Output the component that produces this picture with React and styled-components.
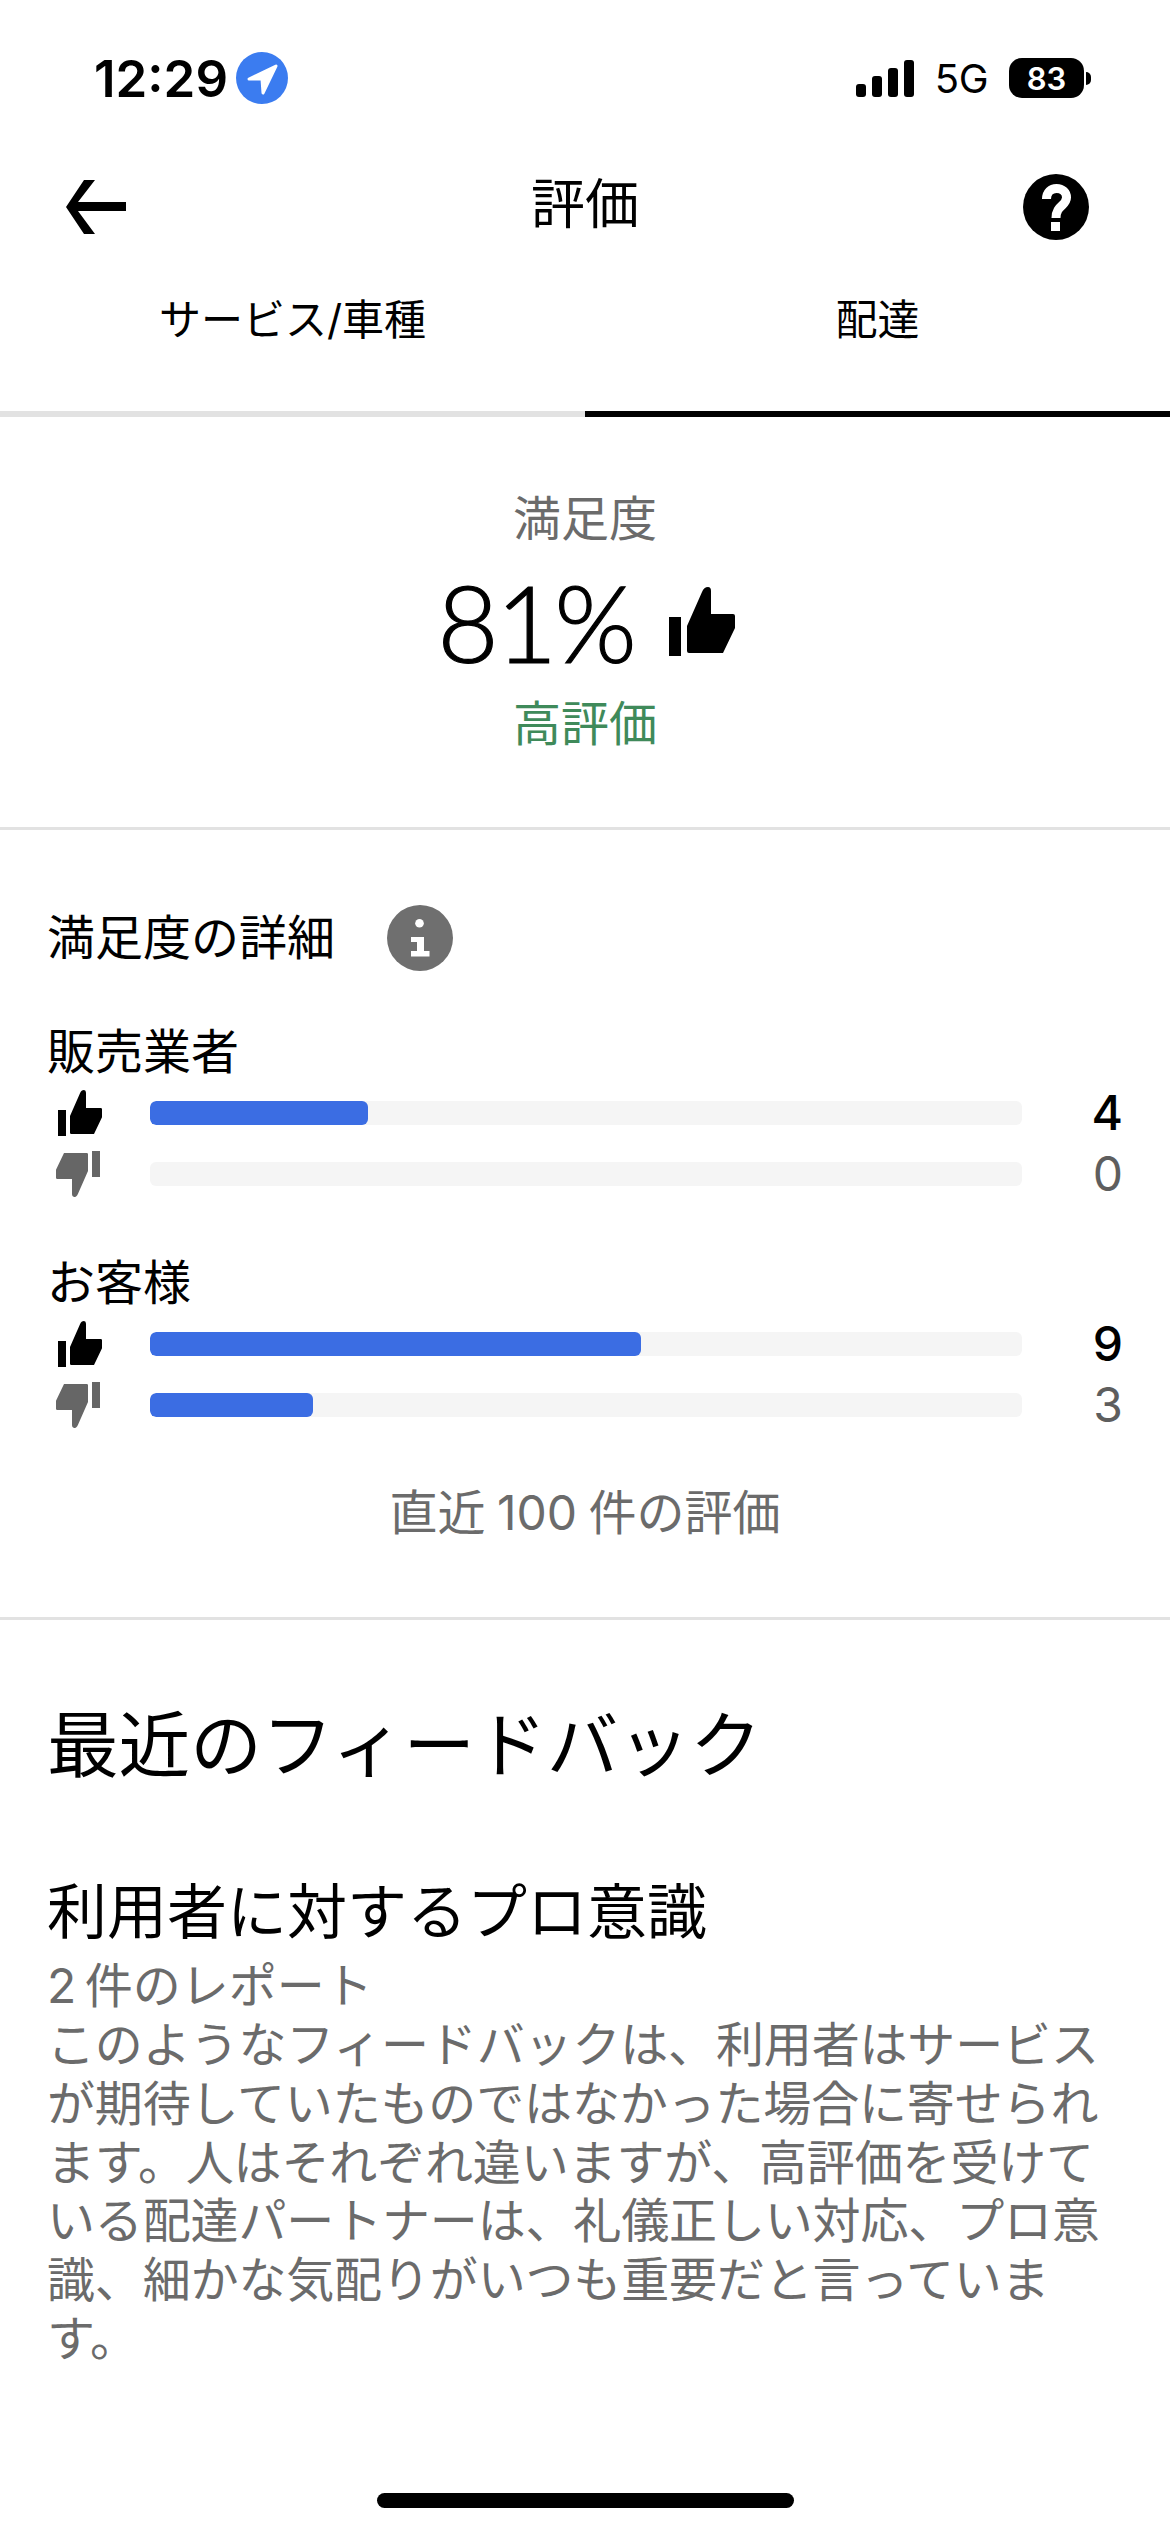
import React from 'react'
import styled, { createGlobalStyle } from 'styled-components'

const GlobalStyle = createGlobalStyle`
  html, body {
    margin: 0;
    padding: 0;
    background: #fff;
  }
  body {
    font-family: Inter, "Noto Sans CJK JP", sans-serif;
    color: #000;
  }
`

const Page = styled.div`
  position: relative;
  width: 1170px;
  height: 2532px;
  overflow: hidden;
  background: #fff;
`

const StatusBar = styled.div`
  height: 156px;
  padding: 0 79px 0 94px;
  box-sizing: border-box;
  display: flex;
  align-items: center;
  justify-content: space-between;
`

const StatusGroup = styled.div`
  display: flex;
  align-items: center;
`

const Clock = styled.span`
  font-size: 51px;
  font-weight: 600;
  margin-right: 8px;
`

const Network = styled.span`
  font-size: 40px;
  letter-spacing: -0.5px;
  margin: 0 21px;
`

const Battery = styled.div`
  position: relative;
  width: 75px;
  height: 40px;
  border-radius: 13px;
  background: #000;
  color: #fff;
  font-size: 31px;
  font-weight: 600;
  display: flex;
  align-items: center;
  justify-content: center;
  margin-right: 7px;

  &::after {
    content: '';
    position: absolute;
    left: 77px;
    top: 14px;
    width: 5px;
    height: 13px;
    border-radius: 0 7px 7px 0;
    background: #000;
  }
`

const NavBar = styled.div`
  height: 102px;
  padding: 0 81px 0 66px;
  box-sizing: border-box;
  display: grid;
  grid-template-columns: 1fr auto 1fr;
  align-items: center;
  justify-items: start;

  & > :last-child {
    justify-self: end;
  }
`

const NavTitle = styled.h1`
  margin: 0 0 4px 15px;
  font-size: 54px;
  font-weight: 400;
  line-height: 1;
`

const Tabs = styled.div`
  display: grid;
  grid-template-columns: 1fr 1fr;
`

const Tab = styled.div`
  height: 159px;
  box-sizing: border-box;
  padding-top: 31px;
  font-size: 42px;
  line-height: 62px;
  text-align: center;
  border-bottom: 6px solid ${({ $active }) => ($active ? '#000' : '#e2e2e2')};
`

const Summary = styled.section`
  height: 413px;
  box-sizing: border-box;
  padding-top: 72px;
  display: flex;
  flex-direction: column;
  align-items: center;
  border-bottom: 3px solid #e2e2e2;
`

const SummaryLabel = styled.div`
  font-size: 48px;
  line-height: 60px;
  color: ${({ $color }) => $color};
`

const Score = styled.div`
  display: flex;
  align-items: center;
  height: 145px;
  padding-left: 2px;
`

const ScoreValue = styled.span`
  font-family: Lato, sans-serif;
  font-size: 106px;
  font-weight: 300;
  letter-spacing: -3px;
  -webkit-text-stroke: 1.2px #000;
  margin-right: 35px;
`

const Details = styled.section`
  padding: 75px 47px 74px;
  border-bottom: 3px solid #e2e2e2;
`

const DetailsHeader = styled.div`
  display: flex;
  align-items: center;
  gap: 52px;
  margin-bottom: 51px;
`

const DetailsTitle = styled.h2`
  margin: 0;
  font-size: 48px;
  font-weight: 400;
  line-height: 66px;
`

const Group = styled.div`
  margin-bottom: 49px;
`

const GroupLabel = styled.div`
  font-size: 48px;
  line-height: 60px;
`

const Row = styled.div`
  height: 61px;
  display: flex;
  align-items: center;
`

const RowIcon = styled.div`
  width: 103px;
  padding-left: ${({ $down }) => ($down ? 9 : 11)}px;
  box-sizing: border-box;
  display: flex;
`

const Track = styled.div`
  width: 872px;
  height: 24px;
  border-radius: 6px;
  background: #f5f5f5;
  overflow: hidden;
`

const Fill = styled.div`
  height: 100%;
  border-radius: 6px;
  background: #3b6de3;
`

const Count = styled.div`
  flex: 1;
  text-align: right;
  font-size: 48px;
  font-weight: ${({ $down }) => ($down ? 400 : 500)};
  color: ${({ $down }) => ($down ? '#5e5e5e' : '#000')};
`

const DetailsNote = styled.div`
  margin-top: -1px;
  font-size: 48px;
  line-height: 60px;
  word-spacing: -2px;
  text-align: center;
  color: #6b6b6b;
`

const Feedback = styled.section`
  padding: 80px 47px 0;
`

const FeedbackTitle = styled.h2`
  margin: 0 0 84px;
  font-size: 71.6px;
  font-weight: 400;
  line-height: 90px;
`

const TopicTitle = styled.h3`
  margin: 0;
  font-size: 60px;
  font-weight: 400;
  line-height: 76px;
`

const TopicCount = styled.div`
  margin-top: 6px;
  font-size: 48px;
  line-height: 60px;
  word-spacing: -5px;
  color: #6b6b6b;
`

const TopicBody = styled.p`
  margin: 0;
  font-size: 48px;
  line-height: 58.8px;
  letter-spacing: -0.15px;
  color: #6b6b6b;
`

const HomeIndicator = styled.div`
  position: absolute;
  left: 377px;
  bottom: 24px;
  width: 417px;
  height: 15px;
  border-radius: 8px;
  background: #000;
`

const SignalIcon = () => (
  <svg width="58" height="37" viewBox="0 0 58 37">
    <rect x="0" y="24" width="10" height="13" rx="3" />
    <rect x="16" y="16" width="10" height="21" rx="3" />
    <rect x="32" y="8" width="10" height="29" rx="3" />
    <rect x="48" y="0" width="10" height="37" rx="3" />
  </svg>
)

const LocationIcon = () => (
  <svg width="52" height="52" viewBox="0 0 52 52">
    <circle cx="26" cy="26" r="26" fill="#3b7cf0" />
    <path
      d="M13 27 L40 14 L27 41 L26 27 Z"
      fill="#fff"
      stroke="#fff"
      strokeWidth="3"
      strokeLinejoin="round"
    />
  </svg>
)

const BackIcon = () => (
  <svg width="60" height="54" viewBox="0 0 60 54">
    <path d="M18 0 H29 L12 22 H60 V31 H12 L29 54 H18 L0 27 Z" />
  </svg>
)

const HelpIcon = () => (
  <svg width="66" height="66" viewBox="0 0 66 66">
    <circle cx="33" cy="33" r="33" />
    <path
      d="M23.5 25 C23.5 18 28 14.5 33.5 14.5 C39.5 14.5 43.5 18.5 43.5 23.5 C43.5 32 33 31 33 44"
      fill="none"
      stroke="#fff"
      strokeWidth="9"
    />
    <rect x="28" y="48" width="9" height="9" fill="#fff" />
  </svg>
)

const InfoIcon = () => (
  <svg width="66" height="66" viewBox="0 0 66 66">
    <circle cx="33" cy="33" r="33" fill="#6f6f6f" />
    <circle cx="32.5" cy="18.3" r="4.3" fill="#fff" />
    <path d="M24 32 H37 V46 H42.5 V51.5 H24 V46 H30 V37 H24 Z" fill="#fff" />
  </svg>
)

const ThumbIcon = ({ width, height, color = '#000', down }) => (
  <svg
    width={width}
    height={height}
    viewBox="0 0 66 69"
    fill={color}
    style={down ? { transform: 'rotate(180deg)' } : undefined}
  >
    <rect x="0" y="30" width="12" height="39" />
    <path d="M18 39 L33 5 Q35 0 39 0 Q42 0 42 4 V27 H64 Q66 27 66 29 V41 L54 66 H20 Q18 66 18 64 Z" />
  </svg>
)

const groups = [
  { label: '販売業者', up: 4, upWidth: 25, down: 0, downWidth: 0 },
  { label: 'お客様', up: 9, upWidth: 56.3, down: 3, downWidth: 18.7 },
]

const RatingRow = ({ value, width, down }) => (
  <Row>
    <RowIcon $down={down}>
      <ThumbIcon width={44} height={46} color={down ? '#666' : '#000'} down={down} />
    </RowIcon>
    <Track>
      <Fill style={{ width: `${width}%` }} />
    </Track>
    <Count $down={down}>{value}</Count>
  </Row>
)

const App = () => (
  <Page>
    <GlobalStyle />
    <StatusBar>
      <StatusGroup>
        <Clock>12:29</Clock>
        <LocationIcon />
      </StatusGroup>
      <StatusGroup>
        <SignalIcon />
        <Network>5G</Network>
        <Battery>83</Battery>
      </StatusGroup>
    </StatusBar>

    <NavBar>
      <BackIcon />
      <NavTitle>評価</NavTitle>
      <HelpIcon />
    </NavBar>

    <Tabs>
      <Tab>サービス/車種</Tab>
      <Tab $active>配達</Tab>
    </Tabs>

    <Summary>
      <SummaryLabel $color="#6b6b6b">満足度</SummaryLabel>
      <Score>
        <ScoreValue>81%</ScoreValue>
        <ThumbIcon width={66} height={69} />
      </Score>
      <SummaryLabel $color="#3f8a5a">高評価</SummaryLabel>
    </Summary>

    <Details>
      <DetailsHeader>
        <DetailsTitle>満足度の詳細</DetailsTitle>
        <InfoIcon />
      </DetailsHeader>
      {groups.map((group) => (
        <Group key={group.label}>
          <GroupLabel>{group.label}</GroupLabel>
          <RatingRow value={group.up} width={group.upWidth} />
          <RatingRow value={group.down} width={group.downWidth} down />
        </Group>
      ))}
      <DetailsNote>直近 100 件の評価</DetailsNote>
    </Details>

    <Feedback>
      <FeedbackTitle>最近のフィードバック</FeedbackTitle>
      <TopicTitle>利用者に対するプロ意識</TopicTitle>
      <TopicCount>2 件のレポート</TopicCount>
      <TopicBody>
        このようなフィードバックは、利用者はサービスが期待していたものではなかった場合に寄せられます。人はそれぞれ違いますが、高評価を受けている配達パートナーは、礼儀正しい対応、プロ意識、細かな気配りがいつも重要だと言っています。
      </TopicBody>
    </Feedback>

    <HomeIndicator />
  </Page>
)

export default App
